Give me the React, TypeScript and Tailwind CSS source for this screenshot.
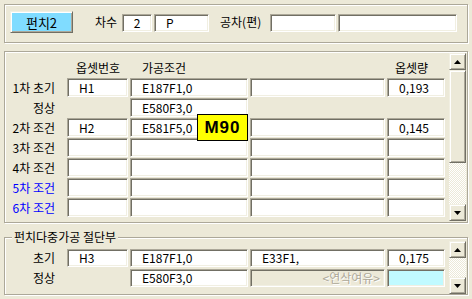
import React from "react";

const sunken =
  "border border-t-[#aca899] border-l-[#aca899] border-b-white border-r-white shadow-[inset_1px_1px_0_#716f64,inset_-1px_-1px_0_#f1efe2]";
const raised =
  "border border-t-[#f1efe2] border-l-[#f1efe2] border-b-[#716f64] border-r-[#716f64] shadow-[inset_1px_1px_0_white,inset_-1px_-1px_0_#aca899]";
const etched =
  "border border-[#aca899] shadow-[1px_1px_0_white,inset_1px_1px_0_white]";

interface FieldProps {
  w: string;
  value?: string;
  className?: string;
}

const Field: React.FC<FieldProps> = ({ w, value = "", className = "bg-white" }) => (
  <div className={`${w} h-full ${sunken} ${className} flex items-center pl-[11px] whitespace-nowrap`}>
    {value}
  </div>
);

const Arrow: React.FC<{ up?: boolean }> = ({ up }) => (
  <svg width="7" height="4" viewBox="0 0 7 4">
    <polygon points={up ? "0,4 3.5,0 7,4" : "0,0 3.5,4 7,0"} fill="black" />
  </svg>
);

const ScrollBar: React.FC<{ thumb?: string; className: string }> = ({ thumb, className }) => (
  <div className={`flex flex-col w-[17px] ${className}`}>
    <div className={`h-[17px] ${raised} bg-[#ece9d8] flex items-center justify-center`}>
      <Arrow up />
    </div>
    {thumb && <div className={`${thumb} ${raised} bg-[#ece9d8]`} />}
    <div className="flex-1 bg-[repeating-conic-gradient(#ece9d8_0_25%,#ffffff_0_50%)] bg-[length:2px_2px]" />
    <div className={`h-[17px] ${raised} bg-[#ece9d8] flex items-center justify-center`}>
      <Arrow />
    </div>
  </div>
);

type Row = { label: string; blue?: boolean; no?: string; cond?: string; amt?: string; condOnly?: boolean };

const rows: Row[] = [
  { label: "1차 초기", no: "H1", cond: "E187F1,0", amt: "0,193" },
  { label: "정상", cond: "E580F3,0", condOnly: true },
  { label: "2차 조건", no: "H2", cond: "E581F5,0", amt: "0,145" },
  { label: "3차 조건" },
  { label: "4차 조건" },
  { label: "5차 조건", blue: true },
  { label: "6차 조건", blue: true },
];

export default function App() {
  return (
    <div className="w-[472px] h-[299px] bg-[#ece9d8] pt-[4px] px-[4px] text-[12px] leading-none text-black font-['Noto_Sans_CJK_KR',sans-serif] overflow-hidden">
      {/* 상단 */}
      <div className={`h-[39px] ${etched} flex items-start pt-[6px] pl-[5px]`}>
        <button className={`w-[63px] shrink-0 h-[22px] bg-[#80dcff] ${raised} text-[13px] flex items-center justify-center`}>
          펀치2
        </button>
        <div className="ml-[22px] w-[27px] mt-[5px] text-[12px]">차수</div>
        <div className="flex gap-[2px] h-[18px] mt-[3px]">
          <div className={`w-[30px] h-full bg-white ${sunken} flex items-center justify-center`}>2</div>
          <Field w="w-[55px]" value="P" />
        </div>
        <div className="ml-[11px] w-[50px] mt-[5px]">공차(편)</div>
        <div className="flex gap-[2px] h-[18px] mt-[3px]">
          <Field w="w-[66px]" />
          <Field w="w-[119px]" />
        </div>
      </div>

      {/* 조건 목록 */}
      <div className={`relative mt-[8px] h-[172px] ${etched} flex`}>
        <div className="w-[444px] flex flex-col pt-[8px]">
          <div className="flex h-[16px] items-center">
            <div className="w-[62px]" />
            <div className="w-[61px] pl-[9px]">옵셋번호</div>
            <div className="ml-[2px] w-[118px] pl-[12px]">가공조건</div>
            <div className="ml-[2px] w-[135px]" />
            <div className="ml-[2px] w-[58px] pl-[8px]">옵셋량</div>
          </div>
          <div className="flex flex-col gap-px mt-[2px]">
            {rows.map((r) => (
              <div key={r.label} className="flex h-[19px] items-center">
                <div className={`w-[50px] text-right whitespace-nowrap ${r.blue ? "text-[#0000ff]" : ""}`}>{r.label}</div>
                <div className="ml-[12px] flex gap-[2px] h-full">
                  {r.condOnly ? <div className="w-[61px]" /> : <Field w="w-[61px]" value={r.no} />}
                  <Field w="w-[118px]" value={r.cond} />
                  {!r.condOnly && <Field w="w-[135px]" />}
                  {!r.condOnly && <Field w="w-[58px]" value={r.amt} />}
                </div>
              </div>
            ))}
          </div>
        </div>
        <ScrollBar thumb="h-[93px]" className="my-[1px] ml-auto mr-[1px]" />
        <div className="absolute left-[192px] top-[62px] w-[51px] h-[27px] bg-[#ffff00] border border-black flex items-center justify-center font-['Liberation_Sans',sans-serif] font-bold text-[17px] tracking-[1px]">
          M90
        </div>
      </div>

      {/* 펀치다중가공 절단부 */}
      <div className={`relative mt-[14px] h-[58px] ${etched} flex`}>
        <div className="absolute left-[7px] -top-[9px] h-[16px] px-[2px] bg-[#ece9d8] flex items-center">
          펀치다중가공 절단부
        </div>
        <div className="w-[444px] flex flex-col pt-[11px] gap-[2px]">
          <div className="flex h-[18px] items-center">
            <div className="w-[50px] text-right">초기</div>
            <div className="ml-[12px] flex gap-[2px] h-full">
              <Field w="w-[61px]" value="H3" />
              <Field w="w-[118px]" value="E187F1,0" />
              <Field w="w-[135px]" value="E33F1," />
              <Field w="w-[58px]" value="0,175" />
            </div>
          </div>
          <div className="flex h-[18px] items-center">
            <div className="w-[50px] text-right">정상</div>
            <div className="ml-[12px] flex gap-[2px] h-full">
              <div className="w-[61px]" />
              <Field w="w-[118px]" value="E580F3,0" />
              <div className={`w-[135px] h-full bg-[#ece9d8] ${sunken} flex items-center justify-end pr-[4px] text-[#aca899] [text-shadow:1px_1px_0_white]`}>
                &lt;연삭여유&gt;
              </div>
              <Field w="w-[58px]" className="bg-[#c1faff]" />
            </div>
          </div>
        </div>
        <ScrollBar className="mt-[3px] h-[53px] ml-auto mr-[1px]" />
      </div>
    </div>
  );
}
